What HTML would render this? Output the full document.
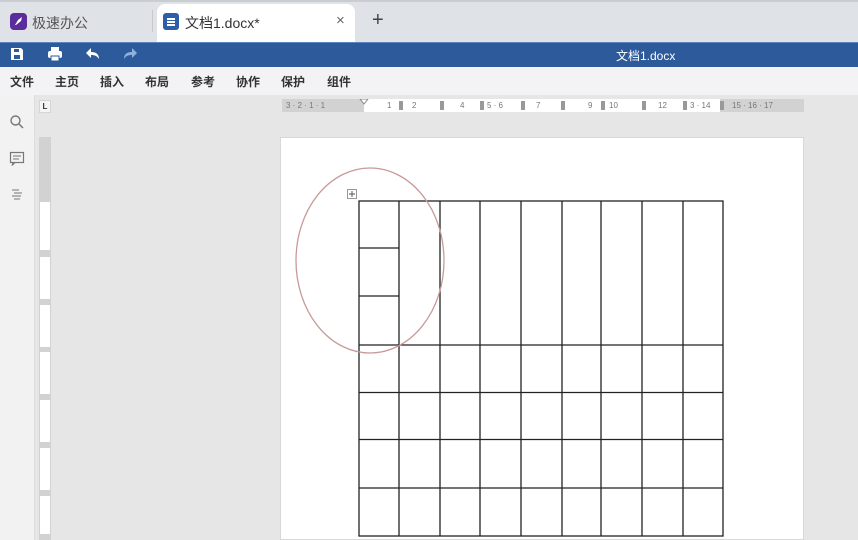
<!DOCTYPE html>
<html><head><meta charset="utf-8"><style>
*{margin:0;padding:0;box-sizing:border-box}
body{width:858px;height:540px;overflow:hidden;background:#e6e6e6;font-family:"Liberation Sans","Noto Sans CJK SC",sans-serif;position:relative}
.abs{position:absolute}
</style></head><body>
<!-- tab bar -->
<div class="abs" style="left:0;top:0;width:858px;height:42px;background:#dfe2e7;border-top:2px solid #c9ccd1"></div>
<div class="abs" style="left:10px;top:13px;width:17px;height:17px;border-radius:4px;background:#5b2d9c"></div>
<svg class="abs" style="left:12px;top:15px" width="13" height="13" viewBox="0 0 13 13"><path d="M3 10 L6 5 L10 2 L9 6 L4 10 Z" fill="#fff"/></svg>
<div class="abs" style="left:32px;top:13px;font-size:14px;color:#555">极速办公</div>
<div class="abs" style="left:152px;top:10px;width:1px;height:22px;background:#c8c8c8"></div>
<div class="abs" style="left:157px;top:4px;width:198px;height:38px;background:#fff;border-radius:8px 8px 0 0"></div>
<div class="abs" style="left:163px;top:13px;width:16px;height:17px;border-radius:3px;background:#2c5fa8"></div>
<div class="abs" style="left:167px;top:18px;width:8px;height:1.5px;background:#fff;box-shadow:0 3px 0 #fff,0 6px 0 #fff"></div>
<div class="abs" style="left:185px;top:13px;font-size:14px;color:#333">文档1.docx*</div>
<div class="abs" style="left:336px;top:12px;font-size:15px;color:#666">×</div>
<div class="abs" style="left:372px;top:9px;font-size:20px;color:#444">+</div>
<!-- blue bar -->
<div class="abs" style="left:0;top:42px;width:858px;height:25px;background:#2d5a9b;border-top:1px solid #5c85bf"></div>
<svg class="abs" style="left:9px;top:46px" width="16" height="16" viewBox="0 0 16 16"><path d="M2 2h10l2 2v10H2z" fill="#fff"/><rect x="5" y="3" width="5" height="3" fill="#2d5a9b"/><rect x="5" y="9" width="6" height="4" fill="#2d5a9b"/></svg>
<svg class="abs" style="left:47px;top:46px" width="16" height="16" viewBox="0 0 16 16"><rect x="4" y="1" width="8" height="4" fill="#fff"/><rect x="1" y="5" width="14" height="7" rx="2" fill="#fff"/><rect x="4" y="10" width="8" height="5" fill="#fff" stroke="#2d5a9b"/></svg>
<svg class="abs" style="left:85px;top:47px" width="16" height="14" viewBox="0 0 16 14"><path d="M6 1L1 6l5 5V8c4 0 6 1 8 4 0-5-3-7-8-7z" fill="#fff"/></svg>
<svg class="abs" style="left:122px;top:47px" width="16" height="14" viewBox="0 0 16 14"><path d="M10 1l5 5-5 5V8c-4 0-6 1-8 4 0-5 3-7 8-7z" fill="#8fb0dd"/></svg>
<div class="abs" style="left:616px;top:47px;font-size:12px;color:#fff">文档1.docx</div>
<!-- menu -->
<div class="abs" style="left:0;top:67px;width:858px;height:28px;background:#f3f3f5"></div>
<div class="abs" style="left:10px;top:73px;font-size:12px;font-weight:bold;color:#333;word-spacing:0;white-space:nowrap">
<span style="position:absolute;left:0">文件</span><span style="position:absolute;left:45px">主页</span><span style="position:absolute;left:90px">插入</span><span style="position:absolute;left:135px">布局</span><span style="position:absolute;left:181px">参考</span><span style="position:absolute;left:226px">协作</span><span style="position:absolute;left:271px">保护</span><span style="position:absolute;left:317px">组件</span></div>
<!-- sidebar -->
<div class="abs" style="left:0;top:95px;width:35px;height:445px;background:#f2f2f2;border-right:1px solid #ddd"></div>
<svg class="abs" style="left:9px;top:114px" width="16" height="16" viewBox="0 0 16 16"><circle cx="6.5" cy="6.5" r="4.5" fill="none" stroke="#777" stroke-width="1.4"/><path d="M10 10l4 4" stroke="#777" stroke-width="1.5"/></svg>
<svg class="abs" style="left:9px;top:151px" width="16" height="16" viewBox="0 0 16 16"><rect x="1.5" y="1.5" width="13" height="10" fill="none" stroke="#777" stroke-width="1.2"/><path d="M4 5h8M4 8h6M4 11.5l-1 3 3-3" stroke="#777" stroke-width="1.1" fill="none"/></svg>
<svg class="abs" style="left:10px;top:188px" width="14" height="14" viewBox="0 0 14 14"><path d="M2 2h7M4 5h8M2 8h9M4 11h6" stroke="#777" stroke-width="1.1"/></svg>
<!-- vertical ruler -->
<div class="abs" style="left:39px;top:100px;width:12px;height:13px;background:#f5f5f5;border:1px solid #d5d5d5;font-size:8px;font-weight:bold;color:#333;text-align:center;line-height:11px">L</div>
<div class="abs" style="left:39px;top:137px;width:12px;height:403px;background:#d2d2d2"></div>
<div class="abs" style="left:40px;top:202px;width:10px;height:48px;background:#fff"></div>
<div class="abs" style="left:40px;top:257px;width:10px;height:42px;background:#fff"></div>
<div class="abs" style="left:40px;top:305px;width:10px;height:42px;background:#fff"></div>
<div class="abs" style="left:40px;top:352px;width:10px;height:42px;background:#fff"></div>
<div class="abs" style="left:40px;top:400px;width:10px;height:42px;background:#fff"></div>
<div class="abs" style="left:40px;top:448px;width:10px;height:42px;background:#fff"></div>
<div class="abs" style="left:40px;top:496px;width:10px;height:38px;background:#fff"></div>
<!-- horizontal ruler -->
<div class="abs" style="left:282px;top:99px;width:522px;height:13px;background:#d2d2d2"></div>
<div class="abs" style="left:364px;top:99px;width:356px;height:13px;background:#fff"></div>
<svg class="abs" style="left:282px;top:99px" width="522" height="13">
<g fill="#999"><rect x="117" y="2" width="4" height="9"/><rect x="158" y="2" width="4" height="9"/><rect x="198" y="2" width="4" height="9"/><rect x="239" y="2" width="4" height="9"/><rect x="279" y="2" width="4" height="9"/><rect x="319" y="2" width="4" height="9"/><rect x="360" y="2" width="4" height="9"/><rect x="401" y="2" width="4" height="9"/><rect x="438" y="2" width="4" height="9"/></g>
<g font-size="8" fill="#777" font-family="Liberation Sans">
<text x="4" y="9">3 · 2 · 1 · 1</text><text x="105" y="9">1</text><text x="130" y="9">2</text><text x="178" y="9">4</text><text x="205" y="9">5 · 6</text><text x="254" y="9">7</text><text x="306" y="9">9</text><text x="327" y="9">10</text><text x="376" y="9">12</text><text x="408" y="9">3 · 14</text><text x="450" y="9">15 · 16 · 17</text></g>
<path d="M78 0h8l-4 5z" fill="#fff" stroke="#888"/></svg>
<!-- page -->
<div class="abs" style="left:280px;top:137px;width:524px;height:403px;background:#fff;border:1px solid #d8d8d8"></div>
<svg class="abs" style="left:0;top:0" width="858" height="540">
<rect x="347.5" y="189.5" width="9" height="9" fill="#fff" stroke="#999"/>
<path d="M352 191v6M349 194h6" stroke="#555" stroke-width="1"/>
<g stroke="#222" stroke-width="1.3" fill="none">
<rect x="359" y="201" width="364" height="335"/>
<path d="M399 201V536M440 201V536M480 201V536M521 201V536M562 201V536M601 201V536M642 201V536M683 201V536"/>
<path d="M359 248H399M359 296H399M359 345H723M359 392.5H723M359 439.5H723M359 488H723"/>
</g>
<ellipse cx="370" cy="260.5" rx="74" ry="92.5" fill="none" stroke="#c89a9a" stroke-width="1.3"/>
</svg>
</body></html>
